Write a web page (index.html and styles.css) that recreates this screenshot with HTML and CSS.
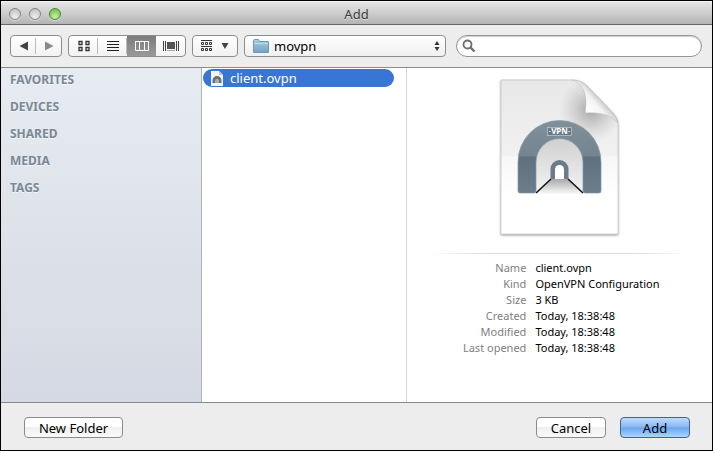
FILE: index.html
```html
<!DOCTYPE html>
<html lang="en">
<head>
<meta charset="utf-8">
<title>Add</title>
<link rel="stylesheet" href="styles.css">
</head>
<body>
<main class="window">
  <header class="titlebar">
    <div class="lights">
      <button class="light" aria-label="Close"></button>
      <button class="light" aria-label="Minimize"></button>
      <button class="light light-zoom" aria-label="Zoom"></button>
    </div>
    <h1 class="title">Add</h1>
  </header>

  <div class="toolbar">
    <div class="segments nav">
      <button class="segment" aria-label="Back"><svg width="10" height="10" viewBox="0 0 10 10"><path d="M9 .5v9L.5 5z" fill="#444"/></svg></button>
      <button class="segment" aria-label="Forward"><svg width="10" height="10" viewBox="0 0 10 10"><path d="M1 .5v9L9.500 5z" fill="#8a8a8a"/></svg></button>
    </div>
    <div class="segments views">
      <button class="segment" aria-label="Icon view"><svg width="12" height="12" viewBox="0 0 12 12" fill="none" stroke="#333"><path d="M1 1.500h3v3H1zM8 1.500h3v3H8zM1 7.500h3v3H1zM8 7.500h3v3H8z" stroke-width="1.300"/></svg></button>
      <button class="segment" aria-label="List view"><svg width="12" height="12" viewBox="0 0 12 12" stroke="#222"><path d="M0 1.500h12M0 4.500h12M0 7.500h12M0 10.500h12"/></svg></button>
      <button class="segment active" aria-label="Column view"><svg width="14" height="12" viewBox="0 0 14 12" fill="none" stroke="#fff"><path d="M.5 1.500h13v9H.5zM4.500 1.500v9M9.500 1.500v9M0 1.500h14"/></svg></button>
      <button class="segment" aria-label="Cover flow view"><svg width="16" height="12" viewBox="0 0 16 12"><path d="M4 2h8v7H4z" fill="#555"/><path d="M.5 1v10M2.500 1v10M13.500 1v10M15.500 1v10" stroke="#444"/><path d="M4 10.500h8" stroke="#aaa"/></svg></button>
    </div>
    <button class="arrange" aria-label="Arrange items">
      <svg width="12" height="12" viewBox="0 0 12 12" fill="none" stroke="#333"><path d="M0 .5h11M0 6.500h11M.5 2.500h2v2h-2zM4.500 2.500h2v2h-2zM8.500 2.500h2v2h-2zM.5 8.500h2v2h-2zM4.500 8.500h2v2h-2zM8.500 8.500h2v2h-2z"/></svg>
      <svg width="8" height="6" viewBox="0 0 8 6"><path d="M.5 0h7L4 6z" fill="#444"/></svg>
    </button>
    <div class="popup">
      <select aria-label="Folder"><option>movpn</option></select>
      <svg class="popup-folder" width="16" height="14" viewBox="0 0 16 14">
        <defs><linearGradient id="folder" x2="0" y2="1"><stop stop-color="#a8cfe4"/><stop offset="1" stop-color="#6fa3c2"/></linearGradient></defs>
        <path d="M.5 13V1.500Q.5.5 1.500.5h4l1 2h8.500q.5 0 .5.500V13q0 .5-.5.5H1q-.5 0-.5-.5z" fill="url(#folder)" stroke="#6b9ab5"/><path d="M1 4.500h14" stroke="#bfdeed"/>
      </svg>
      <svg class="popup-arrows" width="6" height="10" viewBox="0 0 6 10"><path d="M.5 4L3 0l2.500 4zM.5 6L3 10l2.500-4z" fill="#333"/></svg>
    </div>
    <label class="search">
      <svg width="14" height="14" viewBox="0 0 14 14" fill="none" stroke="#6c6c6c"><circle cx="5.500" cy="5.500" r="4" stroke-width="1.800"/><path d="M8.500 8.500L12.500 12.500" stroke-width="2.400"/></svg>
      <input type="search" aria-label="Search">
    </label>
  </div>

  <div class="browser">
    <nav class="sidebar">
      <h2>FAVORITES</h2>
      <h2>DEVICES</h2>
      <h2>SHARED</h2>
      <h2>MEDIA</h2>
      <h2>TAGS</h2>
    </nav>
    <div class="column">
      <button class="file">
        <svg width="12" height="15" viewBox="0 0 12 15"><path d="M0 0h8l4 4v11H0z" fill="#f4f4f4"/><path d="M8 0v4h4z" fill="#b9c4d4"/><path d="M1.500 12V9.500a4.500 4.500 0 0 1 9 0V12h-3V9.500a1.500 1.500 0 0 0-3 0V12z" fill="#66727c"/><path d="M4.500 12V9.500a1.500 1.500 0 0 1 3 0V12z" fill="#aaa"/></svg>
        client.ovpn
      </button>
    </div>
    <section class="preview">
      <svg class="document" width="126" height="164" viewBox="0 0 126 164">
        <defs>
          <linearGradient id="paper" x2="0" y2="1"><stop stop-color="#e8e8e8"/><stop offset=".49" stop-color="#f1f1f1"/><stop offset=".5" stop-color="#f7f7f7"/><stop offset=".75" stop-color="#fff"/></linearGradient>
          <linearGradient id="curl" gradientUnits="userSpaceOnUse" x1="86" y1="40" x2="106" y2="22"><stop stop-color="#e2e2e2"/><stop offset=".3" stop-color="#fff"/><stop offset=".65" stop-color="#f4f4f4"/><stop offset="1" stop-color="#bdbdbd"/></linearGradient>
          <radialGradient id="shade" gradientUnits="userSpaceOnUse" cx="94" cy="34" r="32"><stop stop-color="#777" stop-opacity=".6"/><stop offset="1" stop-color="#aaa" stop-opacity="0"/></radialGradient>
          <linearGradient id="arch" x2="0" y2="1"><stop stop-color="#81909b"/><stop offset=".49" stop-color="#748590"/><stop offset=".5" stop-color="#5f717f"/><stop offset="1" stop-color="#6c7e8b"/></linearGradient>
          <linearGradient id="hall" x2="0" y2="1"><stop stop-color="#cfcfcf"/><stop offset="1" stop-color="#f4f4f4"/></linearGradient>
          <linearGradient id="floor" x2="0" y2="1"><stop stop-color="#aaa"/><stop offset="1" stop-color="#fafafa"/></linearGradient>
          <filter id="drop" x="-10%" y="-10%" width="120%" height="120%"><feDropShadow dx="0" dy="1" stdDeviation="1" flood-opacity=".45"/></filter>
        </defs>
        <path d="M4 4h71Q84 4 90 10l26 27q5 5 5 12v109H4z" fill="url(#paper)" stroke="#bbb" stroke-width=".6" filter="url(#drop)"/>
        <path d="M4 4h71Q84 4 90 10l26 27q5 5 5 12v28H50z" fill="url(#shade)"/>
        <path d="M75 4Q84 4 90 10l26 27q4 4 5 10-10-12-33-10 2-10 0-19Q85 7 75 4z" fill="url(#curl)" stroke="#b4b4b4" stroke-width=".5"/>
        <path d="M39 118V81a24 25 0 0 1 47 0v37z" fill="url(#hall)"/>
        <path d="M39 118L54 103h17l15 15z" fill="url(#floor)"/>
        <path d="M39 117L54 103M71 103L86 117" stroke="#151515" stroke-width="1.600"/>
        <path d="M21 115V86a41.500 41.500 0 0 1 83 0v29q0 2-2 2H88q-2 0-2-2V86a23.500 23.500 0 0 0-47 0v29q0 2-2 2H23q-2 0-2-2z" fill="url(#arch)" stroke="#8496a2" stroke-width=".7"/>
        <path d="M53.500 103V93a9 9 0 0 1 18 0V103z" fill="#6b7b87"/>
        <path d="M58 103V93.500a4.500 4.500 0 0 1 9 0v9.500z" fill="#fff"/>
        <rect x="50.500" y="51.500" width="24" height="8" fill="#687a86" stroke="#c4cdd3" stroke-width=".7"/>
        <text class="badge" x="62.500" y="58" text-anchor="middle">VPN</text>
        <path d="M52 55.500h1.500M71.500 55.500H73" stroke="#dce3e7"/>
      </svg>
      <hr class="rule">
      <dl class="info">
        <dt>Name</dt><dd>client.ovpn</dd>
        <dt>Kind</dt><dd>OpenVPN Configuration</dd>
        <dt>Size</dt><dd>3 KB</dd>
        <dt>Created</dt><dd>Today, 18:38:48</dd>
        <dt>Modified</dt><dd>Today, 18:38:48</dd>
        <dt>Last opened</dt><dd>Today, 18:38:48</dd>
      </dl>
    </section>
  </div>

  <footer class="footer">
    <button class="push new-folder">New Folder</button>
    <button class="push">Cancel</button>
    <button class="push primary">Add</button>
  </footer>
</main>
</body>
</html>
```
FILE: styles.css
```css
* { box-sizing: border-box; }

body {
  margin: 0;
  background: #000;
  color: #000;
  font: 13px/16px "Noto Sans", "Open Sans", sans-serif;
}

button, select, input { font: inherit; color: inherit; margin: 0; padding: 0; }
svg { display: block; flex: none; }

.window {
  display: flex;
  flex-direction: column;
  min-height: 100vh;
  border: 1px solid #000;
  background: #ededed;
}

.titlebar {
  display: grid;
  grid-template-columns: 1fr auto 1fr;
  align-items: center;
  height: 24px;
  padding: 1px 8px 0;
  border-top: 1px solid #f4f4f4;
  border-bottom: 1px solid #686868;
  border-radius: 4px 4px 0 0;
  background: linear-gradient(#e6e6e6, #b4b4b4);
}

.lights { display: flex; gap: 8px; }
.light {
  width: 12px;
  height: 12px;
  border: 1px solid #858585;
  border-radius: 50%;
  background: radial-gradient(circle at 50% 80%, #eee, #bbb);
  box-shadow: 0 1px 0 #ddd;
}
.light-zoom {
  border-color: #48842f;
  background: radial-gradient(circle at 50% 80%, #c7f39d, #68b446);
}
.title {
  margin: 0;
  font-size: 13px;
  font-weight: 400;
  color: #3d3d3d;
  text-shadow: 0 1px 0 #ddd;
}

.toolbar {
  display: flex;
  align-items: center;
  gap: 6px;
  height: 43px;
  padding: 0 10px 0 9px;
  border-bottom: 1px solid #8b8b8b;
}

.segments, .arrange, .popup select {
  height: 22px;
  border: 1px solid #8d8d8d;
  border-radius: 4px;
  background: linear-gradient(#fff, #f2f2f2);
}
.segments { display: flex; overflow: hidden; }
.segment {
  display: flex;
  flex: 1;
  align-items: center;
  justify-content: center;
  border: 0;
  background: linear-gradient(#bbb, #bbb) right / 1px 16px no-repeat;
}
.segment:last-child { background: none; }
.segment.active { background: linear-gradient(#7c7c7c, #999); }
.nav { width: 52px; }
.views { width: 118px; }
.arrange {
  display: flex;
  align-items: center;
  justify-content: center;
  gap: 8px;
  width: 46px;
}

.popup { position: relative; width: 202px; }
.popup select {
  display: block;
  width: 100%;
  padding: 0 20px 0 29px;
  appearance: none;
  background: linear-gradient(#fff, #f0f0f0);
}
.popup-folder, .popup-arrows { position: absolute; top: 4px; pointer-events: none; }
.popup-folder { left: 9px; }
.popup-arrows { right: 6px; top: 6px; }

.search {
  display: flex;
  flex: 1;
  align-items: center;
  height: 22px;
  margin-left: 4px;
  padding: 0 5px;
  border: 1px solid #969696;
  border-radius: 11px;
  background: #fff;
  box-shadow: inset 0 1px 1px #ccc;
}
.search input {
  flex: 1;
  min-width: 0;
  border: 0;
  outline: 0;
  background: transparent;
}

.browser { display: flex; flex: 1; background: #fff; }
.sidebar {
  width: 201px;
  padding: 4px 9px;
  border-right: 1px solid #b0b3b8;
  background: linear-gradient(#e6ecf1, #d4d9e3);
}
.sidebar h2 {
  margin: 0 0 11px;
  font-size: 12px;
  font-weight: 700;
  color: #7b8895;
  text-shadow: 0 1px 0 #f3f6f9;
}
.column {
  width: 205px;
  padding: 1px 12px 0 1px;
  border-right: 1px solid #d5d5d5;
}
.file {
  display: flex;
  align-items: center;
  gap: 7px;
  width: 100%;
  height: 18px;
  padding: 0 8px;
  border: 0;
  border-radius: 9px;
  background: #3875d7;
  color: #fff;
}

.preview {
  display: flex;
  flex: 1;
  flex-direction: column;
  align-items: center;
  padding: 8px 24px 0;
}
.badge { font: 700 8px "Noto Sans", sans-serif; fill: #fff; }
.rule {
  width: 100%;
  height: 1px;
  margin: 13px 0 6px;
  border: 0;
  background: linear-gradient(90deg, #fff, #dcdcdc 20%, #dcdcdc 80%, #fff);
}
.info {
  display: grid;
  grid-template-columns: 5fr 8fr;
  column-gap: 9px;
  width: 100%;
  margin: 0;
  font-size: 11px;
  white-space: nowrap;
}
.info dt { color: #808080; text-align: right; }
.info dd { margin: 0; }

.footer {
  display: flex;
  gap: 14px;
  height: 48px;
  padding: 14px 22px 0 23px;
  border-top: 1px solid #898989;
}
.push {
  width: 70px;
  height: 21px;
  border: 1px solid #8b8b8b;
  border-radius: 4px;
  background: linear-gradient(#fff, #fff 45%, #f0f0f0 50%, #fafafa);
}
.new-folder { width: 99px; margin-right: auto; }
.primary {
  border-color: #45619a;
  background: linear-gradient(#c1dcf8, #87b8f1 48%, #69a6ed 52%, #abd7fb);
}
```
